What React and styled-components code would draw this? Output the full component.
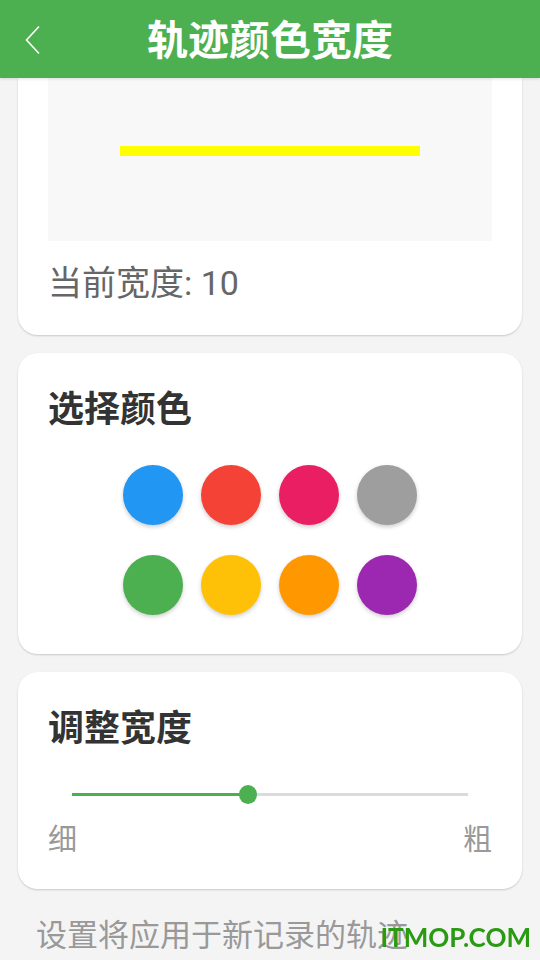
import React, { useState } from 'react';
import styled, { createGlobalStyle } from 'styled-components';

const GlobalStyle = createGlobalStyle`
  * {
    box-sizing: border-box;
  }

  body {
    margin: 0;
    background: #f4f4f4;
    font-family: Roboto, "Noto Sans CJK SC", sans-serif;
  }
`;

// Styled Components
const Header = styled.header`
  position: sticky;
  top: 0;
  z-index: 1;
  display: grid;
  grid-template-columns: 66px 1fr 66px;
  align-items: center;
  height: 78px;
  padding-top: 2px;
  background: #4caf50;
  box-shadow: 0 1px 3px rgba(0, 0, 0, 0.12);
`;

const BackButton = styled.button`
  display: flex;
  align-items: center;
  justify-content: center;
  height: 76px;
  padding: 0;
  border: none;
  background: none;
  color: #fff;
  cursor: pointer;
`;

const Title = styled.h1`
  margin: 0;
  padding-top: 2px;
  color: #fff;
  font-size: 41px;
  font-weight: 700;
  line-height: 60px;
  text-align: center;
`;

const Content = styled.main`
  display: flex;
  flex-direction: column;
  gap: 18px;
  padding: 0 18px;
`;

const Card = styled.section`
  padding: ${(props) => (props.$attached ? '0 30px 30px' : '30px')};
  border-radius: ${(props) => (props.$attached ? '0 0 20px 20px' : '20px')};
  background: #fff;
  box-shadow: 0 1px 2px rgba(0, 0, 0, 0.18);
`;

const Preview = styled.div`
  padding: 68px 72px 85px;
  background: #f8f8f8;
`;

const TrackLine = styled.div`
  background: #ffff00;
`;

const CurrentWidth = styled.p`
  margin: 20px 0 0;
  color: #666;
  font-size: 34px;
  line-height: 44px;
`;

const SectionTitle = styled.h2`
  margin: 0;
  color: #333;
  font-size: 36px;
  font-weight: 700;
  line-height: 54px;
`;

const Palette = styled.div`
  display: grid;
  grid-template-columns: repeat(4, 60px);
  justify-content: center;
  gap: 30px 18px;
  padding: 28px 0 9px;
`;

const Swatch = styled.button`
  height: 60px;
  padding: 0;
  border: none;
  border-radius: 50%;
  background: ${(props) => props.$color};
  box-shadow: 0 2px 4px rgba(0, 0, 0, 0.2);
  cursor: pointer;
`;

const SliderRow = styled.div`
  display: flex;
  padding: 29px 15px 17px;
`;

/* The thumb is 18px wide, so the track is inset by half of it on each side */
const Slider = styled.input`
  appearance: none;
  flex: 1;
  min-width: 0;
  height: 19px;
  margin: 0;
  background: linear-gradient(
      to right,
      #4caf50 var(--fill),
      #dbdbdb var(--fill)
    )
    center / calc(100% - 18px) 3px no-repeat;
  cursor: pointer;

  &::-webkit-slider-thumb {
    appearance: none;
    width: 18px;
    height: 19px;
    border-radius: 50%;
    background: #4caf50;
  }
`;

const RangeLabels = styled.div`
  display: flex;
  justify-content: space-between;
  color: #999;
  font-size: 29px;
  line-height: 38px;
`;

const Hint = styled.p`
  margin: 0;
  padding: 6px 18px 0;
  color: #999;
  font-size: 31px;
  line-height: 46px;
`;

const Watermark = styled.span`
  position: fixed;
  right: 9px;
  bottom: 5px;
  color: #299a12;
  font-family: Lato, sans-serif;
  font-size: 26px;
  font-weight: 700;
  line-height: 36px;
`;

const MIN_WIDTH = 2;
const MAX_WIDTH = 20;

const COLORS = [
  { name: '蓝色', value: '#2196f3' },
  { name: '红色', value: '#f44336' },
  { name: '粉色', value: '#e91e63' },
  { name: '灰色', value: '#9e9e9e' },
  { name: '绿色', value: '#4caf50' },
  { name: '黄色', value: '#ffc107' },
  { name: '橙色', value: '#ff9800' },
  { name: '紫色', value: '#9c27b0' },
];

const App = () => {
  const [width, setWidth] = useState(10);
  const [color, setColor] = useState('#ffff00');

  const fill = ((width - MIN_WIDTH) / (MAX_WIDTH - MIN_WIDTH)) * 100;

  return (
    <>
      <GlobalStyle />
      <Header>
        <BackButton aria-label="返回">
          <svg width="16" height="30" viewBox="0 0 16 30" fill="none">
            <path d="M14 1.5L1.5 15L14 28.5" stroke="currentColor" strokeWidth="1.6" />
          </svg>
        </BackButton>
        <Title>轨迹颜色宽度</Title>
      </Header>
      <Content>
        <Card $attached>
          <Preview>
            <TrackLine style={{ height: width, backgroundColor: color }} />
          </Preview>
          <CurrentWidth>当前宽度: {width}</CurrentWidth>
        </Card>
        <Card>
          <SectionTitle>选择颜色</SectionTitle>
          <Palette>
            {COLORS.map((item) => (
              <Swatch
                key={item.value}
                $color={item.value}
                aria-label={item.name}
                onClick={() => setColor(item.value)}
              />
            ))}
          </Palette>
        </Card>
        <Card>
          <SectionTitle id="width-title">调整宽度</SectionTitle>
          <SliderRow>
            <Slider
              type="range"
              aria-labelledby="width-title"
              min={MIN_WIDTH}
              max={MAX_WIDTH}
              value={width}
              onChange={(e) => setWidth(Number(e.target.value))}
              style={{ '--fill': `${fill}%` }}
            />
          </SliderRow>
          <RangeLabels>
            <span>细</span>
            <span>粗</span>
          </RangeLabels>
        </Card>
        <Hint>设置将应用于新记录的轨迹</Hint>
      </Content>
      <Watermark>ITMOP.COM</Watermark>
    </>
  );
};

export default App;
